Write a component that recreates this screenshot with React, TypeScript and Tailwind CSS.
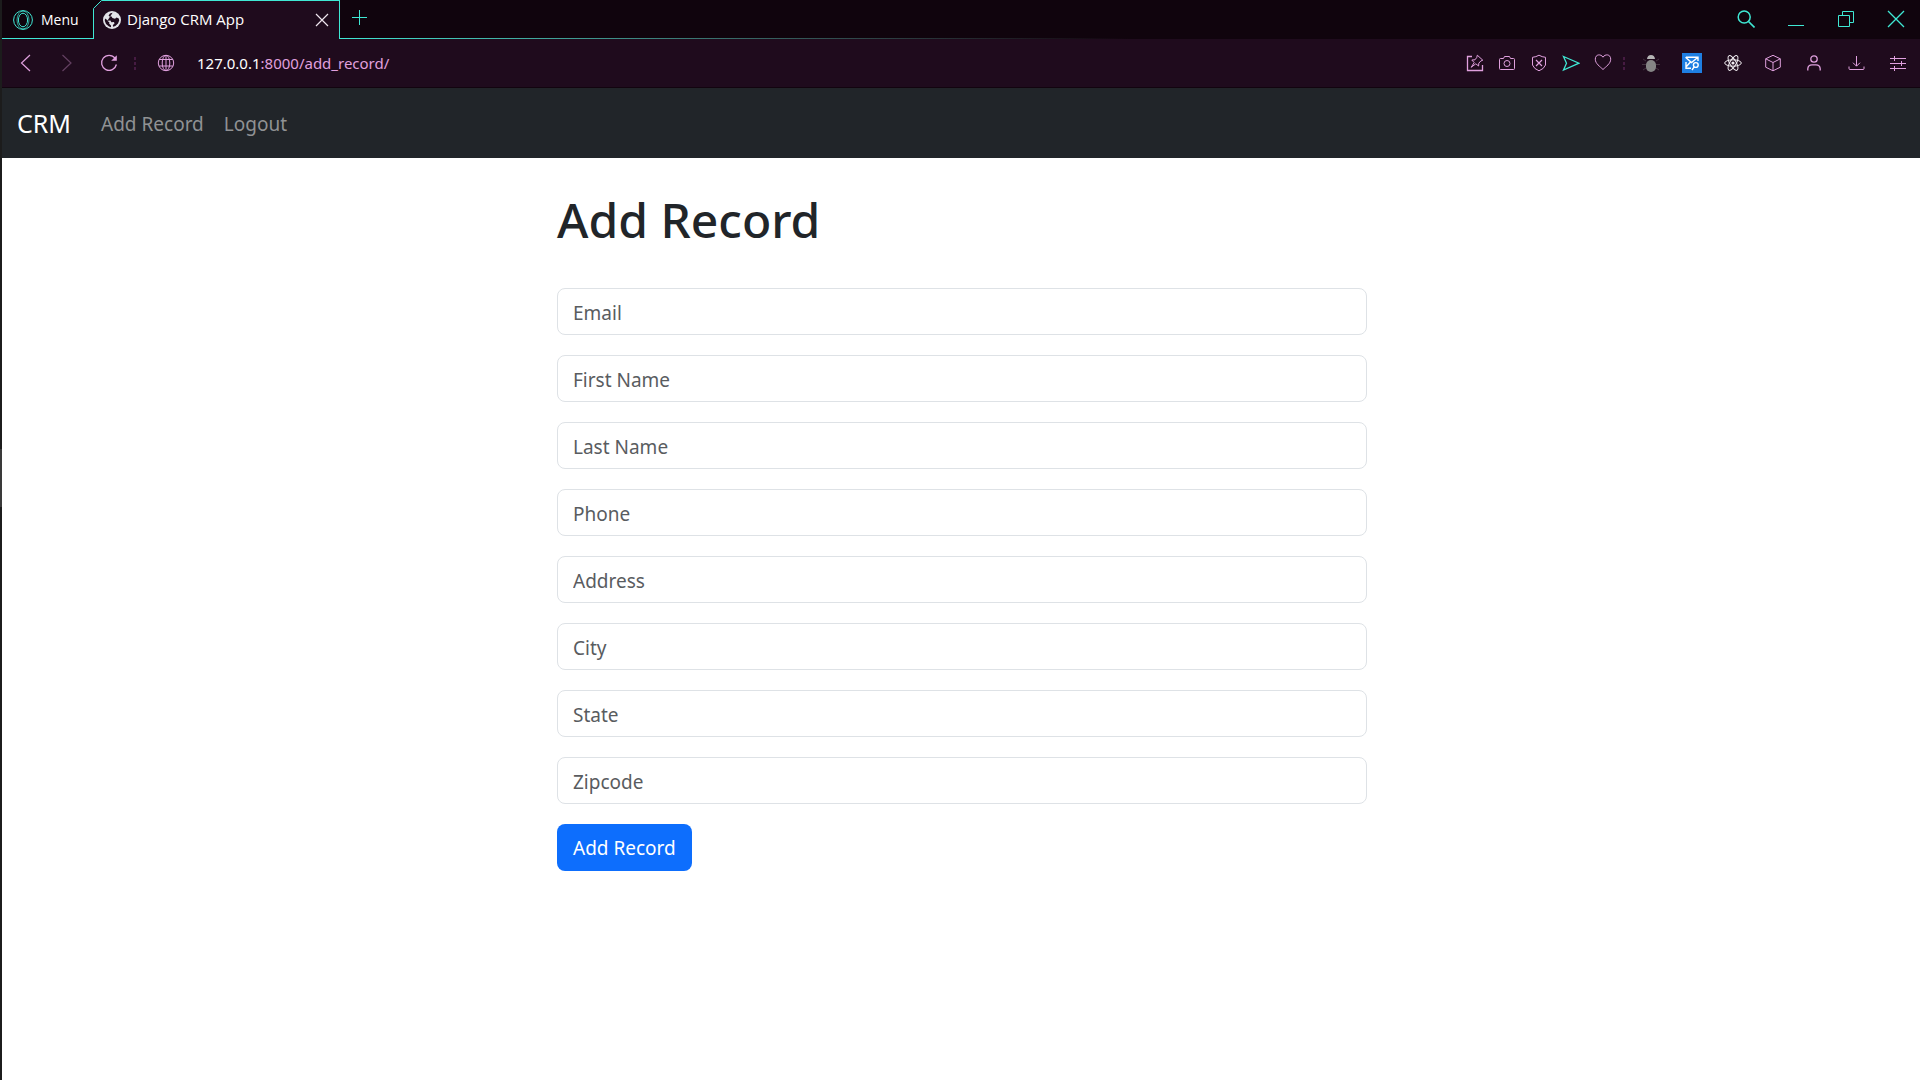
import React from "react";

const PINK = "#e0a0de";
const TEAL = "#3fe8d4";

type IconProps = { children: React.ReactNode; className?: string; color?: string; size?: number; vb?: string };

function Icon({ children, className = "", color = PINK, size = 18, vb = "0 0 18 18" }: IconProps) {
  return (
    <svg
      width={size}
      height={size}
      viewBox={vb}
      fill="none"
      stroke={color}
      strokeWidth="1"
      className={`shrink-0 ${className}`}
      aria-hidden="true"
    >
      {children}
    </svg>
  );
}

function TabBar() {
  return (
    <div className="flex h-[39px] bg-[#10040d]">
      <button className="flex w-[91px] items-center gap-2 border-b border-[#3fe8d4] pt-px pl-[11px] text-[14px] text-white">
        <Icon color={TEAL} size={20} vb="0 0 20 20">
          <circle cx="10" cy="10" r="9.4" />
          <ellipse cx="10" cy="10" rx="4.6" ry="6.8" />
          <ellipse cx="10" cy="10" rx="6" ry="9" opacity="0.7" />
        </Icon>
        Menu
      </button>

      <div className="flex w-[247px]">
        <svg width="9" height="39" viewBox="0 0 9 39" className="shrink-0" aria-hidden="true">
          <path d="M0 39V8.5L8.5 0H9V39Z" fill="#1f0b1d" />
          <path d="M.5 39V8.5L8.5 .5H9" fill="none" stroke={TEAL} />
        </svg>
        <div className="flex flex-1 items-center border-t border-r border-[#3fe8d4] bg-[#1f0b1d] pr-[10px] pb-px text-[15px] text-white">
          <svg width="18" height="18" viewBox="0 0 18 18" className="mr-[6px] ml-px shrink-0" aria-hidden="true">
            <circle cx="9" cy="9" r="9" fill="#e3e3e8" />
            <path
              d="M9.6 1.8 7 2.6 5.6 4.4 6.4 5.6 8.6 5.4 9.4 7 12 7.8 13.6 6.6 15.8 7.6 16.2 9.6 15 12.6 12.4 15 10.2 15.8 9.8 14.2 11.6 12.2 10.8 11 8.4 11.2 7.4 9.6 4.6 9.2 2 7.6 1.8 9.8 3 13 6 15.6 8 16.2 8 14.6 6.2 12.8 6.4 11.4 4.4 9.8Z"
              fill="#1f0b1d"
            />
          </svg>
          <span className="flex-1 whitespace-nowrap">Django CRM App</span>
          <button aria-label="Close tab">
            <Icon color="#f0e6ef" size={14} vb="0 0 14 14">
              <path d="M1 1 13 13M13 1 1 13" strokeWidth="1.2" />
            </Icon>
          </button>
        </div>
      </div>

      <div className="flex flex-1 flex-col">
        <div className="flex flex-1 items-center justify-between pr-[15px] pl-3">
          <button aria-label="New tab" className="-mt-1">
            <Icon color={TEAL} size={15} vb="0 0 15 15">
              <path d="M0 7.5H15M7.5 0V15" />
            </Icon>
          </button>
          <div className="flex items-center gap-8">
            <button aria-label="Search" className="-mt-px">
              <Icon color={TEAL} size={18}>
                <circle cx="7.2" cy="7" r="6" strokeWidth="1.5" />
                <path d="M11.5 11.5 17.5 17.5" strokeWidth="1.6" />
              </Icon>
            </button>
            <button aria-label="Minimize">
              <Icon color={TEAL}>
                <path d="M1 15.5H17" />
              </Icon>
            </button>
            <button aria-label="Restore">
              <Icon color={TEAL}>
                <path d="M1.5 5.5H12.5V16.5H1.5ZM5.5 5.5V1.5H16.5V12.5H12.5" />
              </Icon>
            </button>
            <button aria-label="Close">
              <Icon color={TEAL}>
                <path d="M1 1 17 17M17 1 1 17" strokeWidth="1.3" />
              </Icon>
            </button>
          </div>
        </div>
        <div className="h-px bg-linear-to-r from-[#3fe8d4] to-[#10040d] to-50%" />
      </div>
    </div>
  );
}

function Dots() {
  return (
    <svg width="2" height="13" viewBox="0 0 2 13" fill="#461b42" className="shrink-0" aria-hidden="true">
      <path d="M0 0h2v3H0zM0 5h2v3H0zM0 10h2v3H0z" />
    </svg>
  );
}

function AddressBar() {
  return (
    <div className="flex h-[49px] items-center border-b border-[#12040f] bg-[#1f0b1d] pr-[13px] pl-[15px]">
      <button aria-label="Back" className="mr-[23px]">
        <Icon>
          <path d="M13 1 4.5 9 13 17" strokeWidth="1.2" />
        </Icon>
      </button>
      <button aria-label="Forward" className="mr-6">
        <Icon className="opacity-35">
          <path d="M4.5 1 13 9 4.5 17" strokeWidth="1.2" />
        </Icon>
      </button>
      <button aria-label="Reload" className="mr-4">
        <Icon>
          <path d="M15 4.2A7.5 7.5 0 1 0 16.4 10.5" strokeWidth="1.3" />
          <path d="M16.8 1.2V6.8H11.2Z" fill={PINK} stroke="none" />
        </Icon>
      </button>
      <Dots />
      <button aria-label="Site information" className="mr-[22px] ml-[21px]">
        <Icon>
          <circle cx="9" cy="9" r="7.7" />
          <ellipse cx="9" cy="9" rx="3.8" ry="7.7" />
          <path d="M9 1V17M2.2 5.5H15.8M2.2 12H15.8" />
        </Icon>
      </button>
      <a href="#address" className="flex-1 font-['Noto_Sans',sans-serif] text-[15px] text-[#e0a0de]">
        <span className="text-white">127.0.0.1</span>:8000/add_record/
      </a>

      <div className="flex items-center">
        <div className="flex items-center gap-[14px]">
          <button aria-label="Pin page">
            <Icon>
              <path d="M6 2.5H1.5V16.5H16.5V11" strokeWidth="1.3" />
              <path d="M11.3 1.2 16.8 6.2 14.8 7 12.8 9.2 12.6 12 9.8 9.8 5.2 13.3 8.2 8.6 5.8 6 9 5.8 10.8 3.4Z" />
            </Icon>
          </button>
          <button aria-label="Snapshot">
            <Icon>
              <path d="M2.5 4.5H5.5L6.5 2.5H11.5L12.5 4.5H15.5Q16.5 4.5 16.5 5.5V14.5Q16.5 15.5 15.5 15.5H2.5Q1.5 15.5 1.5 14.5V5.5Q1.5 4.5 2.5 4.5Z" />
              <circle cx="9" cy="9.5" r="3" />
            </Icon>
          </button>
          <button aria-label="Ad blocker">
            <Icon>
              <path d="M9 1.2Q12 3 15.5 3.3V11Q14 15 9 16.8 4 15 2.5 11V3.3Q6 3 9 1.2Z" />
              <path d="M6 6 12 12M12 6 6 12" strokeWidth="1.2" />
            </Icon>
          </button>
          <button aria-label="Send to flow">
            <Icon color={TEAL}>
              <path d="M1.5 2.5 17 9.2 1.5 16 4.5 9.2Z" strokeWidth="1.3" />
            </Icon>
          </button>
          <button aria-label="Bookmark">
            <Icon>
              <path d="M9 3.2C7 -.3 1.3 0 1.3 5.2 1.3 9.7 6 12.5 9 15.5 12 12.5 16.7 9.7 16.7 5.2 16.7 0 11 -.3 9 3.2Z" />
            </Icon>
          </button>
        </div>
        <div className="mr-[17px] ml-[11px]">
          <Dots />
        </div>
        <div className="flex items-center gap-[22px]">
          <button aria-label="Bug extension">
            <Icon color="#5b5058">
              <path d="M1 5 4 7M17 5 14 7M0 10.5H4M18 10.5H14M1 16 4 14M17 16 14 14" opacity="0.6" />
              <path d="M5 5Q5.5 1 9 1T13 5Z" fill="#b5b5b5" stroke="none" />
              <rect x="4" y="6" width="10" height="12" rx="5" fill="#858585" stroke="none" />
            </Icon>
          </button>
          <button aria-label="Mail tracker" className="bg-[#1e7fe2]">
            <Icon color="#fff" size={20} vb="0 0 20 20">
              <path d="M9 15.3H4V9M4 4.2H16V8M3.5 4.2 9.5 9.5 16 4.2M4 14 8.5 9" strokeWidth="1.4" />
              <circle cx="13.8" cy="12" r="2.4" strokeWidth="1.4" />
              <path d="M12.2 13.8 10 17" strokeWidth="1.4" />
            </Icon>
          </button>
          <button aria-label="React tools">
            <Icon color="#f2eef2">
              <ellipse cx="9" cy="9" rx="8.3" ry="3.2" />
              <ellipse cx="9" cy="9" rx="8.3" ry="3.2" transform="rotate(60 9 9)" />
              <ellipse cx="9" cy="9" rx="8.3" ry="3.2" transform="rotate(120 9 9)" />
              <circle cx="9" cy="9" r="1.6" fill="#f2eef2" stroke="none" />
            </Icon>
          </button>
          <button aria-label="Extensions">
            <Icon>
              <path d="M9 1.3 16.3 4.8V13.2L9 16.8 1.7 13.2V4.8ZM1.7 4.8 9 8.5 16.3 4.8M9 8.5V16.8" />
            </Icon>
          </button>
          <div className="flex items-center gap-6 pl-px">
            <button aria-label="Profile">
              <Icon>
                <circle cx="9" cy="5" r="3.2" strokeWidth="1.3" />
                <path d="M2.8 16.5V14.8Q3 10.8 7 10.8H11Q15 10.8 15.2 14.8V16.5" strokeWidth="1.3" />
              </Icon>
            </button>
            <button aria-label="Downloads">
              <Icon>
                <path d="M9.5 2V12M6 8.7 9.5 12.2 13 8.7M2 12.5V14.5Q2 15.5 3 15.5H16Q17 15.5 17 14.5V12.5" />
              </Icon>
            </button>
            <button aria-label="Easy setup">
              <Icon>
                <path d="M1 4.5H17M1 9.5H17M1 14.5H17M5.5 2V7M12.5 7V12M5.5 12V17" />
              </Icon>
            </button>
          </div>
        </div>
      </div>
    </div>
  );
}

const fields = ["Email", "First Name", "Last Name", "Phone", "Address", "City", "State", "Zipcode"];

export default function App() {
  return (
    <div className="flex min-h-screen bg-white font-['Noto_Sans',sans-serif] text-[#212529]">
      <div className="flex w-[2px] shrink-0 flex-col bg-[#1c1c1c]">
        <div className="h-[449px]" />
        <div className="h-[58px] bg-[#3a3a3a]" />
      </div>
      <div className="min-w-0 flex-1">
        <header className="font-['Open_Sans',sans-serif]">
          <TabBar />
          <AddressBar />
        </header>
        <nav className="flex h-[70px] items-center bg-[#212529] px-[15px] pt-[2px]">
          <a href="#home" className="mr-[30px] text-[25px] text-white">
            CRM
          </a>
          <a href="#add" className="mr-5 text-[19px] text-[#909294]">
            Add Record
          </a>
          <a href="#logout" className="text-[19px] text-[#909294]">
            Logout
          </a>
        </nav>
        <main className="pt-8 pl-[2px]">
          <div className="mx-auto flex max-w-[810px] flex-col items-start">
            <h1 className="mb-[38px] text-[48px] leading-[60px] font-medium">Add Record</h1>
            <form className="flex w-full flex-col items-start gap-5" onSubmit={(e) => e.preventDefault()}>
              {fields.map((f) => (
                <input
                  key={f}
                  aria-label={f}
                  placeholder={f}
                  className="h-[47px] w-full rounded-[8px] border border-[#dee2e6] px-[15px] pt-[2px] text-[19px] text-[#212529] placeholder:text-[#595c5f]"
                />
              ))}
              <button className="h-[47px] rounded-[8px] bg-[#0d6efd] px-4 pt-[2px] text-[19px] text-white">
                Add Record
              </button>
            </form>
          </div>
        </main>
      </div>
    </div>
  );
}
